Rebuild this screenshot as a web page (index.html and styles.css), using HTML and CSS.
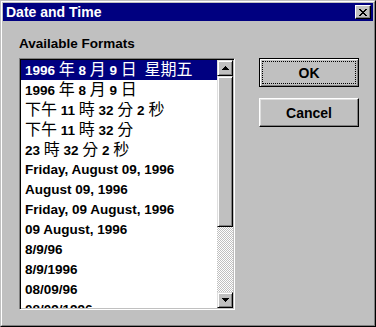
FILE: index.html
```html
<!DOCTYPE html>
<html lang="zh-Hant">
<head>
    <meta charset="UTF-8">
    <title>Date and Time</title>
    <link rel="stylesheet" href="styles.css">
</head>
<body>
    <div class="window">
        <div class="frame">
            <div class="titlebar">
                <span class="title">Date and Time</span>
                <button class="close">
                    <svg width="8" height="7" viewBox="0 0 8 7">
                        <path d="M0 0h2v1h1v1h2v-1h1v-1h2v1h-1v1h-1v1h-1v1h1v1h1v1h1v1h-2v-1h-1v-1h-2v1h-1v1h-2v-1h1v-1h1v-1h1v-1h-1v-1h-1v-1h-1z" fill="#000"/>
                    </svg>
                </button>
            </div>
            <div class="content">
                <div class="formats">
                    <div class="label">Available Formats</div>
                    <div class="listbox">
                        <ul class="items">
                            <li class="selected">1996 <span class="cjk">年</span> 8 <span class="cjk">月</span> 9 <span class="cjk">日</span>&nbsp; <span class="cjk">星期五</span></li>
                            <li>1996 <span class="cjk">年</span> 8 <span class="cjk">月</span> 9 <span class="cjk">日</span></li>
                            <li><span class="cjk">下午</span> 11 <span class="cjk">時</span> 32 <span class="cjk">分</span> 2 <span class="cjk">秒</span></li>
                            <li><span class="cjk">下午</span> 11 <span class="cjk">時</span> 32 <span class="cjk">分</span></li>
                            <li>23 <span class="cjk">時</span> 32 <span class="cjk">分</span> 2 <span class="cjk">秒</span></li>
                            <li>Friday, August 09, 1996</li>
                            <li>August 09, 1996</li>
                            <li>Friday, 09 August, 1996</li>
                            <li>09 August, 1996</li>
                            <li>8/9/96</li>
                            <li>8/9/1996</li>
                            <li>08/09/96</li>
                            <li>08/09/1996</li>
                        </ul>
                        <div class="scrollbar">
                            <div class="arrow">
                                <svg width="7" height="4" viewBox="0 0 7 4"><path d="M3 0h1v1h1v1h1v1h1v1h-7v-1h1v-1h1v-1h1z" fill="#000"/></svg>
                            </div>
                            <div class="thumb"></div>
                            <div class="track"></div>
                            <div class="arrow">
                                <svg width="7" height="4" viewBox="0 0 7 4"><path d="M0 0h7v1h-1v1h-1v1h-1v1h-1v-1h-1v-1h-1v-1h-1z" fill="#000"/></svg>
                            </div>
                        </div>
                    </div>
                </div>
                <div class="buttons">
                    <button class="btn default"><span class="focus">OK</span></button>
                    <button class="btn">Cancel</button>
                </div>
            </div>
        </div>
    </div>
</body>
</html>
```

FILE: styles.css
```css
/* Win95 style dialog */
body {
    margin: 0;
    background-color: #c0c0c0;
    font-family: "Liberation Sans", Arial, "Noto Sans CJK TC", sans-serif;
    font-weight: bold;
    font-size: 13.5px;
    color: #000;
}

.window {
    width: 376px;
    height: 327px;
    box-sizing: border-box;
    border: 1px solid;
    border-color: #c0c0c0 #000 #000 #c0c0c0;
}

.frame {
    height: 100%;
    box-sizing: border-box;
    border: 1px solid;
    border-color: #fff #808080 #808080 #fff;
    padding: 1px;
}

.titlebar {
    height: 18px;
    background-color: #000080;
    color: #fff;
    display: flex;
    align-items: center;
    justify-content: space-between;
    padding: 0 2px 0 3px;
}

.title {
    font-size: 14px;
}

.close {
    width: 16px;
    height: 14px;
    padding: 0;
    display: flex;
    align-items: center;
    justify-content: center;
    background-color: #c0c0c0;
    border: 1px solid;
    border-color: #fff #000 #000 #fff;
    box-shadow: inset -1px -1px #808080;
}

.content {
    display: flex;
    padding: 15px 0 0 16px;
}

.formats {
    width: 216px;
}

.label {
    line-height: 16px;
    margin-bottom: 6px;
}

.listbox {
    display: flex;
    width: 216px;
    height: 252px;
    box-sizing: border-box;
    padding: 1px;
    background-color: #fff;
    border: 1px solid;
    border-color: #808080 #fff #fff #808080;
    box-shadow: inset 1px 1px #000, inset -1px -1px #c0c0c0;
}

.items {
    flex: 1;
    margin: 0;
    padding: 0;
    list-style: none;
    overflow: hidden;
}

.items li {
    height: 20px;
    line-height: 20px;
    padding-left: 4px;
    white-space: nowrap;
}

.items li.selected {
    background-color: #000080;
    color: #fff;
}

.cjk {
    font-family: "Noto Sans CJK TC", sans-serif;
    font-weight: normal;
    font-size: 16px;
    line-height: 1;
}

.scrollbar {
    width: 16px;
    display: flex;
    flex-direction: column;
}

.arrow,
.thumb {
    box-sizing: border-box;
    background-color: #c0c0c0;
    border: 1px solid;
    border-color: #dfdfdf #000 #000 #dfdfdf;
    box-shadow: inset 1px 1px #fff, inset -1px -1px #808080;
}

.arrow {
    height: 16px;
    display: flex;
    align-items: center;
    justify-content: center;
}

.thumb {
    height: 151px;
}

.track {
    flex: 1;
    background: repeating-conic-gradient(#fff 0 25%, #c0c0c0 0 50%) 0 0 / 2px 2px;
}

.buttons {
    display: flex;
    flex-direction: column;
    gap: 11px;
    margin: 22px 0 0 24px;
}

.btn {
    width: 100px;
    height: 29px;
    padding: 0;
    font: inherit;
    font-size: 14px;
    color: #000;
    background-color: #c0c0c0;
    border: 1px solid;
    border-color: #fff #000 #000 #fff;
    box-shadow: inset -1px -1px #808080, inset 1px 1px #dfdfdf;
}

.btn.default {
    border-color: #000;
    box-shadow: inset 1px 1px #fff, inset -1px -1px #808080;
    padding: 2px;
}

.focus {
    display: flex;
    align-items: center;
    justify-content: center;
    height: 100%;
    box-sizing: border-box;
    border: 1px dotted #000;
}
```
